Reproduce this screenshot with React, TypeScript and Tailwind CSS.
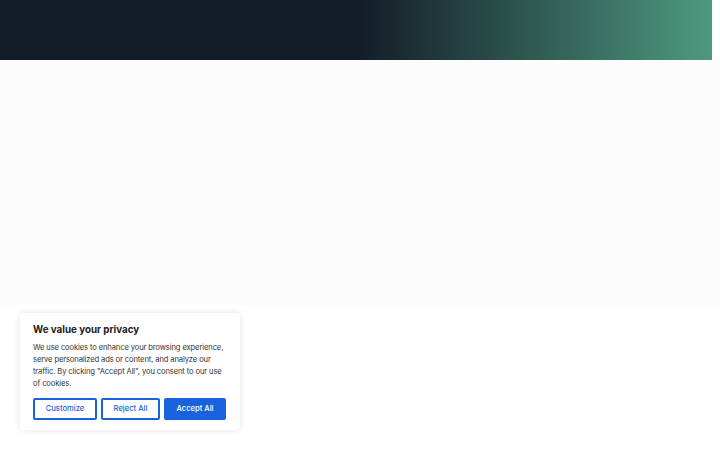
export default function App() {
  return (
    <div className="relative w-[720px] h-[450px] overflow-hidden bg-white font-['Inter',sans-serif]">
      {/* Header band */}
      <div className="w-[712px] h-[60px] bg-[linear-gradient(to_right,#131c27_0%,#131c27_50%,#1f3438_60%,#2f5a53_75%,#4e9a7f_100%)]" />

      {/* Page body */}
      <div className="w-[720px] h-[245px] bg-[#fcfcfd]" />

      {/* Cookie consent */}
      <div className="absolute left-[20px] top-[313px] w-[220px] h-[117px] rounded bg-white pl-[13px] pr-[12px] pt-[10px] shadow-[0_0_6px_rgba(0,0,0,0.12)]">
        <h2 className="text-[9.8px] font-bold leading-[13px] text-[#212121]">We value your privacy</h2>
        <p className="mt-[6px] text-[7.6px] leading-[12px] tracking-[-0.12px] text-[#333333]">
          We use cookies to enhance your browsing experience, serve personalized ads or content, and analyze our traffic. By clicking "Accept All", you consent to our use of cookies.
        </p>
        <div className="mt-[8px] flex gap-[4px]">
          <button className="h-[22px] w-[64px] rounded-[2px] border-2 border-[#1863dc] text-[7.6px] font-medium text-[#1863dc]">Customize</button>
          <button className="h-[22px] w-[59px] rounded-[2px] border-2 border-[#1863dc] text-[7.6px] font-medium text-[#1863dc]">Reject All</button>
          <button className="h-[22px] w-[62px] rounded-[2px] border-2 border-[#1863dc] bg-[#1863dc] text-[7.6px] font-medium text-white">Accept All</button>
        </div>
      </div>
    </div>
  );
}
